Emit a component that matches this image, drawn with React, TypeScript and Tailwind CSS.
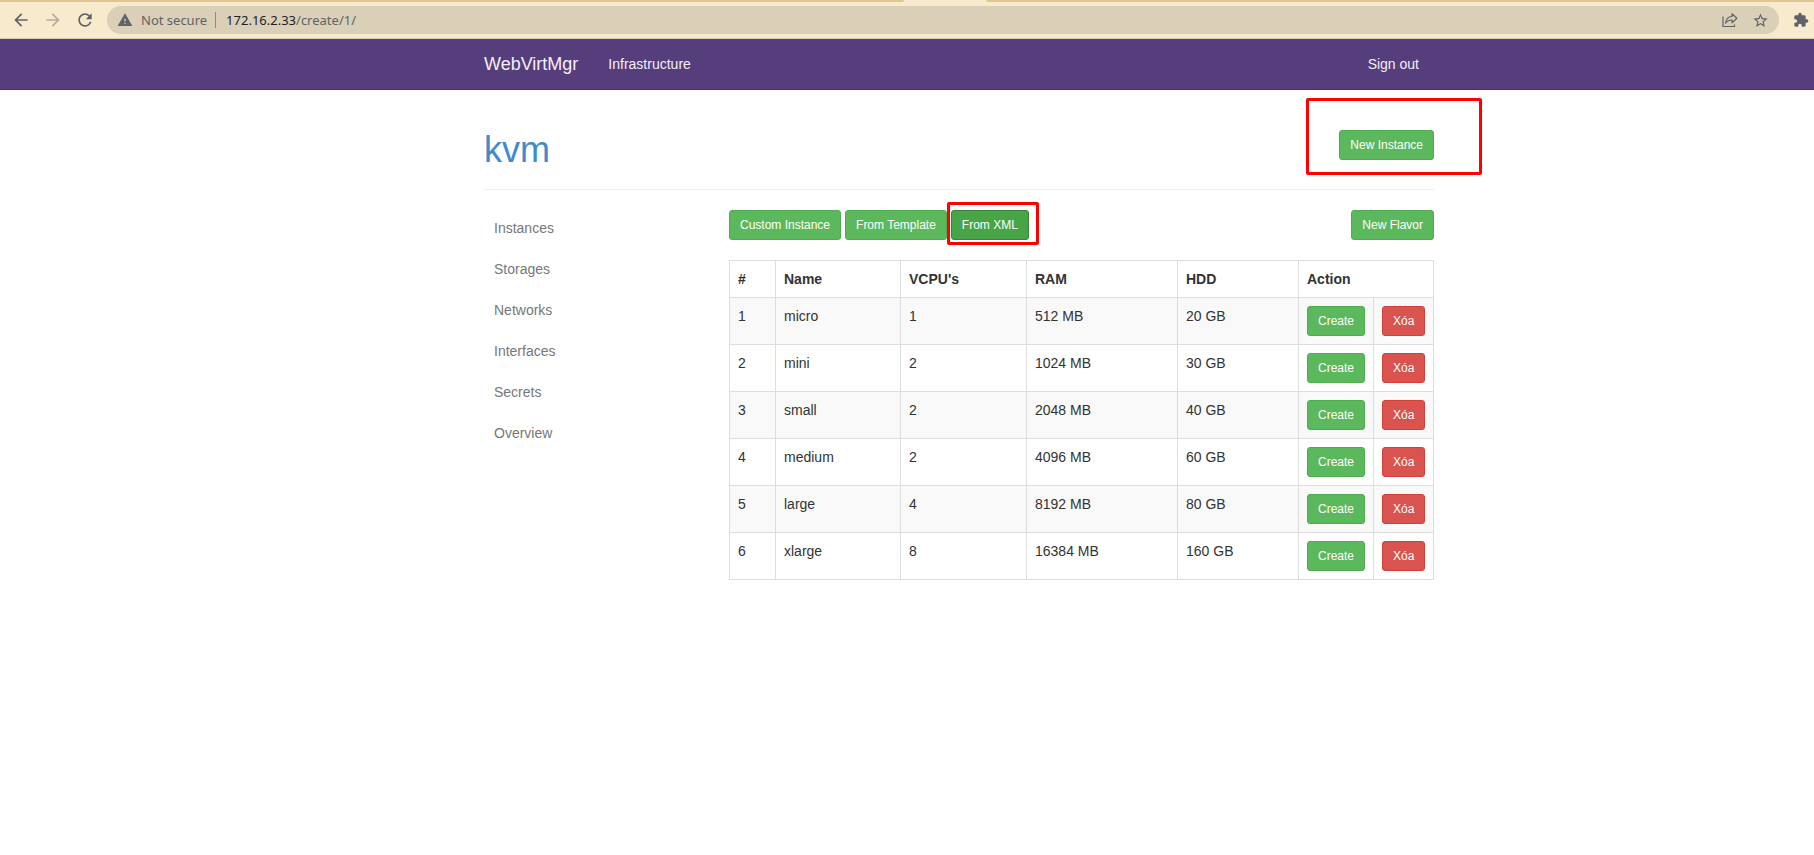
import React from "react";
import { MdArrowBack, MdArrowForward, MdRefresh, MdWarning, MdStarBorder, MdExtension } from "react-icons/md";

const flavors = [
  { id: 1, name: "micro", vcpu: 1, ram: "512 MB", hdd: "20 GB" },
  { id: 2, name: "mini", vcpu: 2, ram: "1024 MB", hdd: "30 GB" },
  { id: 3, name: "small", vcpu: 2, ram: "2048 MB", hdd: "40 GB" },
  { id: 4, name: "medium", vcpu: 2, ram: "4096 MB", hdd: "60 GB" },
  { id: 5, name: "large", vcpu: 4, ram: "8192 MB", hdd: "80 GB" },
  { id: 6, name: "xlarge", vcpu: 8, ram: "16384 MB", hdd: "160 GB" },
];

const sections = ["Instances", "Storages", "Networks", "Interfaces", "Secrets", "Overview"];

const tones = {
  green: "bg-[#5cb85c] border-[#4cae4c]",
  active: "bg-[#47a447] border-[#398439]",
  red: "bg-[#d9534f] border-[#d43f3a]",
};

function Button({ tone = "green", children }: { tone?: keyof typeof tones; children: React.ReactNode }) {
  return (
    <button
      type="button"
      className={`rounded-[3px] border px-2.5 py-[5px] text-xs leading-[18px] font-medium whitespace-nowrap text-white ${tones[tone]}`}
    >
      {children}
    </button>
  );
}

function ShareIcon() {
  return (
    <svg width="16" height="16" viewBox="0 0 16 16" fill="none" stroke="currentColor" strokeWidth="1.2" aria-hidden="true">
      <path d="M1 4.500v10h11.500V12.500" />
      <path d="M10 1.800v2.700C6.200 4.700 4 7 3.600 11.200c1.500-2.200 3.400-3.200 6.400-3.200v2.800l4.900-4.500z" strokeLinejoin="round" />
    </svg>
  );
}

function BrowserBar() {
  return (
    <div className="border-b border-[#d5cbae] bg-[#f7eacd] text-[#5f6368]">
      <div className="flex h-0.5" aria-hidden="true">
        <div className="w-[904px] rounded-br-sm bg-[#ddc793]" />
        <div className="w-[82px]" />
        <div className="flex-1 rounded-bl-sm bg-[#ddc793]" />
      </div>
      <div className="flex h-9 items-center">
        <div className="flex w-[107px] shrink-0 items-center gap-3 pl-[11px]">
          <button type="button" aria-label="Back"><MdArrowBack size={20} /></button>
          <button type="button" aria-label="Forward" className="text-[#b5ac9a]"><MdArrowForward size={20} /></button>
          <button type="button" aria-label="Reload"><MdRefresh size={20} /></button>
        </div>
        <div className="flex h-7 flex-1 items-center rounded-full bg-[#dacfb7] px-2.5 font-['Noto_Sans','Open_Sans',sans-serif] text-[13px]">
          <MdWarning size={16} />
          <span className="ml-2 whitespace-nowrap">Not secure</span>
          <span className="mr-2.5 ml-2 h-4 w-px bg-[#8f8a80]" />
          <span className="whitespace-nowrap"><span className="text-[#202124]">172.16.2.33</span>/create/1/</span>
          <button type="button" aria-label="Share" className="mr-3.5 ml-auto"><ShareIcon /></button>
          <button type="button" aria-label="Bookmark"><MdStarBorder size={17} /></button>
        </div>
        <button type="button" aria-label="Extensions" className="ml-3.5 w-[21px] shrink-0"><MdExtension size={16} /></button>
      </div>
    </div>
  );
}

export default function App() {
  return (
    <div className="min-h-screen bg-white font-['Liberation_Sans',Arial,sans-serif] text-sm leading-5 text-[#333]">
      <BrowserBar />
      <nav className="border-b border-[#463265] bg-[#563d7c] pl-[104px] text-[#f3eff8]">
        <div className="mx-auto flex h-[50px] max-w-[950px] items-center">
          <a href="#" className="text-lg leading-5">WebVirtMgr</a>
          <a href="#" className="ml-[30px]">Infrastructure</a>
          <a href="#" className="mr-[15px] ml-auto">Sign out</a>
        </div>
      </nav>
      <div className="pl-[104px]">
        <div className="mx-auto max-w-[950px] pt-10">
          <header className="flex items-start justify-between border-b border-[#eee] pb-[19px]">
            <h1 className="text-4xl leading-10 font-medium text-[#428bca]">kvm</h1>
            <div className="relative flex">
              <Button>New Instance</Button>
              <div className="pointer-events-none absolute -top-8 -right-12 -bottom-[15px] -left-[33px] rounded-[2px] border-3 border-[#fe0000]" />
            </div>
          </header>
          <div className="mt-5 flex">
            <aside className="w-[245px] shrink-0">
              <ul className="flex flex-col gap-[5px]">
                {sections.map((s) => (
                  <li key={s}><a href="#" className="block px-2.5 py-2 text-[#777]">{s}</a></li>
                ))}
              </ul>
            </aside>
            <main className="min-w-0 flex-1">
              <div className="flex gap-1">
                <Button>Custom Instance</Button>
                <Button>From Template</Button>
                <div className="relative flex">
                  <Button tone="active">From XML</Button>
                  <div className="pointer-events-none absolute -top-2 -right-2.5 -bottom-[5px] -left-1 rounded-[2px] border-3 border-[#fe0000]" />
                </div>
                <div className="ml-auto flex"><Button>New Flavor</Button></div>
              </div>
              <table className="mt-5 w-full table-fixed border-collapse text-left [&_td]:border [&_td]:border-[#ddd] [&_td]:p-2 [&_td]:align-top [&_th]:border [&_th]:border-[#ddd] [&_th]:p-2">
                <colgroup>
                  <col className="w-[46px]" />
                  <col className="w-[125px]" />
                  <col className="w-[126px]" />
                  <col className="w-[151px]" />
                  <col className="w-[121px]" />
                  <col className="w-[75px]" />
                  <col className="w-[60px]" />
                </colgroup>
                <thead>
                  <tr>
                    <th>#</th>
                    <th>Name</th>
                    <th>VCPU's</th>
                    <th>RAM</th>
                    <th>HDD</th>
                    <th colSpan={2}>Action</th>
                  </tr>
                </thead>
                <tbody>
                  {flavors.map((f) => (
                    <tr key={f.id} className="odd:bg-[#f9f9f9]">
                      <td>{f.id}</td>
                      <td>{f.name}</td>
                      <td>{f.vcpu}</td>
                      <td>{f.ram}</td>
                      <td>{f.hdd}</td>
                      <td><div className="flex"><Button>Create</Button></div></td>
                      <td><div className="flex"><Button tone="red">Xóa</Button></div></td>
                    </tr>
                  ))}
                </tbody>
              </table>
            </main>
          </div>
        </div>
      </div>
    </div>
  );
}
